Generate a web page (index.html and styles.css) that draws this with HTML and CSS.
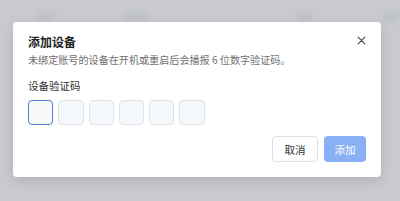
FILE: index.html
```html
<!DOCTYPE html>
<html lang="zh-Hans">
  <head>
    <meta charset="UTF-8" />
    <meta name="viewport" content="width=device-width, initial-scale=1.0" />
    <title>添加设备</title>
    <link rel="stylesheet" href="styles.css">
  </head>
  <body>
    <div class="backdrop">
      <div class="behind">
        <span class="ghost w1"></span>
        <span class="ghost w2"></span>
        <span class="ghost w3"></span>
        <span class="ghost w4"></span>
      </div>
    </div>
    <div class="modal">
      <button class="close" aria-label="关闭">
        <svg width="9" height="9" viewBox="0 0 9 9">
          <path d="M1.2 1.2L7.8 7.8M7.8 1.2L1.2 7.8" stroke="#444" stroke-width="1.1" stroke-linecap="round" />
        </svg>
      </button>
      <h2 class="title">添加设备</h2>
      <p class="subtitle">未绑定账号的设备在开机或重启后会播报 6 位数字验证码。</p>
      <div class="label">设备验证码</div>
      <div class="code-row">
        <input class="code-box active" maxlength="1" />
        <input class="code-box" maxlength="1" />
        <input class="code-box" maxlength="1" />
        <input class="code-box" maxlength="1" />
        <input class="code-box" maxlength="1" />
        <input class="code-box" maxlength="1" />
      </div>
      <div class="actions">
        <button class="btn btn-cancel">取消</button>
        <button class="btn btn-primary" disabled>添加</button>
      </div>
    </div>
  </body>
</html>
```

FILE: styles.css
```css
/* 弹窗样式 */
body {
  margin: 0;
  padding: 22px 19px 24px 13px;
  background: #c8cacf;
  font-family: "Noto Sans CJK SC", "Noto Sans", sans-serif;
  color: #333;
  overflow: hidden;
}

.backdrop {
  position: absolute;
  inset: 0;
  overflow: hidden;
}

.behind {
  display: flex;
  gap: 60px;
  padding: 14px 0 0 38px;
  filter: blur(3px);
}

.ghost {
  display: block;
  height: 6px;
  background: #b9bcc2;
  border-radius: 3px;
}

.w1 { width: 30px; }
.w2 { width: 45px; margin-left: 10px; }
.w3 { width: 30px; margin-left: 90px; }
.w4 { width: 32px; margin-left: 10px; }

.modal {
  position: relative;
  box-sizing: border-box;
  width: 368px;
  height: 155px;
  padding: 11px 15px 15px;
  background: #fff;
  border-radius: 4px;
  box-shadow: 0 4px 12px rgba(0, 0, 0, 0.12);
}

.close {
  position: absolute;
  top: 12px;
  right: 13px;
  width: 13px;
  height: 13px;
  padding: 0;
  border: none;
  background: none;
  display: flex;
  align-items: center;
  justify-content: center;
}

.title {
  margin: 0;
  font-size: 12px;
  line-height: 18px;
  font-weight: 700;
  color: #222;
}

.subtitle {
  margin: 1px 0 0;
  font-size: 10.1px;
  line-height: 16px;
  color: #6f6f6f;
}

.label {
  margin-top: 10px;
  font-size: 10.5px;
  line-height: 16px;
  color: #333;
}

.code-row {
  display: flex;
  gap: 5px;
  margin-top: 6px;
}

.code-box {
  box-sizing: border-box;
  width: 25.3px;
  height: 25px;
  padding: 0;
  border: 1px solid #dfe3e8;
  border-radius: 4px;
  background: #f5f8fa;
}

.code-box.active {
  border-color: #4d7fcf;
  background: #f7f9fb;
}

.actions {
  display: flex;
  justify-content: flex-end;
  gap: 6px;
  margin-top: 11px;
}

.btn {
  box-sizing: border-box;
  height: 26px;
  padding: 0;
  border-radius: 4px;
  font-family: inherit;
  font-size: 10.5px;
}

.btn-cancel {
  width: 46px;
  border: 1px solid #dcdfe6;
  background: #fff;
  color: #333;
}

.btn-primary {
  width: 42px;
  border: none;
  background: #89b0f4;
  color: #fff;
}
```
